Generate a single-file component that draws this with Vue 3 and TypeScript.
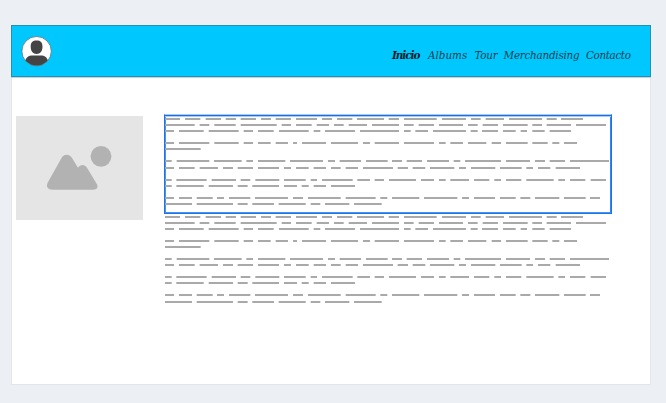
<script setup lang="ts">
interface Line {
  top: number
  words: number[]
}

interface NavItem {
  label: string
  slot: string
}

const nav: NavItem[] = [
  { label: 'Inicio', slot: 'inicio' },
  { label: 'Albums', slot: 'albums' },
  { label: 'Tour', slot: 'tour' },
  { label: 'Merchandising', slot: 'merch' },
  { label: 'Contacto', slot: 'contacto' },
]

// Start/end pairs of each placeholder word, in thirds of a pixel
const words: number[][] = [
  [0,45,60,106,122,168,182,213,227,273,288,318,332,378,393,456,471,501,516,562,576,657,671,702,717,815,831,903,918,947,962,1017,1032,1131,1145,1175,1188,1254],
  [0,89,104,133,148,212,227,335,350,378,393,440,455,492,507,536,551,606,621,702,717,746,761,807,822,894,909,938,953,999,1014,1088,1102,1131,1145,1218,1233,1323],
  [0,27,42,116,131,221,236,264,279,326,342,431,446,466,480,570,585,702,717,737,751,789,804,903,917,938,951,999,1014,1052,1067,1086,1102,1139,1154,1218],
  [0,27,42,133,148,221,236,264,279,317,332,369,384,396,411,483,498,579,594,615,629,702,717,807,822,842,856,894,909,964,980,1008,1023,1088,1102,1148,1162,1183,1197,1236],
  [0,107],
  [0,20,35,133,147,230,244,264,279,361,375,474,489,510,524,588,603,668,681,711,725,771,786,852,866,886,900,1008,1023,1095,1110,1140,1154,1200,1215,1332],
  [0,27,42,89,104,159,174,204,218,264,279,342,357,378,393,431,446,483,498,527,542,579,594,684,698,729,743,781,795,868,882,903,918,991,1005,1070,1084,1104,1119,1156,1172,1245],
  [0,20,34,125,140,213,227,256,271,343,357,422,437,456,471,563,577,615,629,657,672,753,768,807,822,842,856,912,927,973,988,1008,1023,1069,1084,1166,1180,1200,1215,1261,1277,1323],
  [0,20,34,116,131,204,218,248,262,342,357,396,410,431,446,483,498,570],
  [0,27,42,81,95,143,156,177,192,256,270,369,384,414,429,527,542,632,646,667,681,763,777,877,891,912,927,990,1005,1052,1066,1096,1110,1183,1197,1262,1275,1305],
  [0,81,95,204,218,248,262,327,341,422,437,466,480,553,567,650],
]

const makeBlock = (tops: number[]): Line[] => tops.map((top, i) => ({ top, words: words[i] }))

const blocks = [
  { selected: true, lines: makeBlock([4, 10, 16, 28, 34, 46, 53, 65, 71, 83, 89]) },
  { selected: false, lines: makeBlock([2, 8, 14, 26, 32, 44, 50, 62, 68, 80, 87]) },
]

function linePath(line: Line): string {
  let d = ''
  for (let i = 0; i < line.words.length; i += 2) {
    d += `M${(line.words[i] / 3).toFixed(2)} ${line.top + 1}H${(line.words[i + 1] / 3).toFixed(2)}`
  }
  return d
}
</script>

<template>
  <div class="canvas">
    <div class="page">
      <header class="header">
        <svg class="avatar" width="32" height="32" viewBox="0 0 32 32">
          <defs>
            <clipPath id="avatar-clip"><circle cx="15.6" cy="16.2" r="14.6" /></clipPath>
          </defs>
          <circle cx="15.6" cy="16.2" r="14.7" fill="#fff" />
          <g clip-path="url(#avatar-clip)" fill="#444">
            <path d="M9.7 11.5C9.7 7.3 11.7 5.5 15.6 5.5s5.9 1.8 5.9 6c0 4.700-2.200 7.500-5.900 7.500s-5.900-2.800-5.900-7.500Z" />
            <path d="M4 32V27c.8-4.800 3.600-6.400 7.600-6.400h8c4 0 6.800 1.600 7.600 6.400v5Z" />
          </g>
          <circle cx="15.6" cy="16.2" r="14.7" fill="none" stroke="#45636e" stroke-width=".7" />
        </svg>
        <nav class="nav">
          <a v-for="item in nav" :key="item.slot" :class="['link', item.slot]">{{ item.label }}</a>
        </nav>
      </header>
      <main class="content">
        <svg class="picture" width="127" height="104" viewBox="0 0 127 104">
          <rect width="127" height="104" fill="#e5e5e5" />
          <circle cx="85" cy="40.3" r="10.4" fill="#b2b2b2" />
          <path d="M31.8 66.5L45.500 42C48 37.600 53.200 37.600 56 42L62 51.800C64.500 48 68.500 48 71 51.800L80.500 67.500C82.800 71.300 81 73.700 77 73.700H37C31.500 73.700 29.700 70.500 31.800 66.500Z" fill="#b2b2b2" />
        </svg>
        <div class="copy">
          <div v-for="(block, i) in blocks" :key="i" :class="['block', { selected: block.selected }]">
            <svg class="lines" width="446" height="98" viewBox="0 0 446 98">
              <path v-for="line in block.lines" :key="line.top" :d="linePath(line)" />
            </svg>
          </div>
        </div>
      </main>
    </div>
  </div>
</template>

<style>
body {
  margin: 0;
  background: #ecf0f5;
}
</style>

<style scoped>
.canvas {
  box-sizing: border-box;
  width: 666px;
  height: 403px;
  padding: 25px 15px 18px 11px;
  background: #ecf0f5;
}
.page {
  height: 360px;
  background: #fff;
  box-shadow: inset 0 0 0 1px #e3e6e9;
}
.header {
  box-sizing: border-box;
  display: flex;
  align-items: center;
  justify-content: space-between;
  height: 52px;
  padding: 0 11px 0 9px;
  background: #00c8ff;
  border: 1px solid #2690ae;
  box-shadow: 0 1px 0 #c3d3d9;
}
.avatar {
  display: block;
}
.nav {
  display: grid;
  grid-template-columns: 36px 46.5px 29px 82.5px 53px;
  padding-top: 8px;
  font: italic 11.5px/16px "DejaVu Serif Condensed", "DejaVu Serif", serif;
  letter-spacing: -0.22px;
  color: #123e4c;
  white-space: nowrap;
}
.inicio {
  font-weight: bold;
  color: #001c25;
  letter-spacing: -1px;
}
.albums {
  letter-spacing: 0;
}
.contacto {
  letter-spacing: -0.35px;
}
.content {
  display: flex;
  align-items: flex-start;
  gap: 21px;
  padding: 37px 0 0 5px;
}
.picture {
  display: block;
  margin-top: 2px;
}
.copy {
  width: 448px;
}
.block {
  box-sizing: border-box;
  height: 100px;
  padding-left: 1px;
}
.selected {
  padding-left: 0;
  border: 1px solid #1b73ea;
  border-top-color: #a9cbfa;
  box-shadow: inset 0 1px 0 #1b6ee4, inset 0 2px 0 #a9cbfa, inset 0 -1px 0 #4b92f3, inset 1px 0 0 #4b92f3, inset -1px 0 0 #3583ef;
}
.selected .lines {
  margin-top: -1px;
}
.lines {
  display: block;
}
.lines path {
  fill: none;
  stroke: #a9a9a9;
  stroke-width: 2;
}
</style>
